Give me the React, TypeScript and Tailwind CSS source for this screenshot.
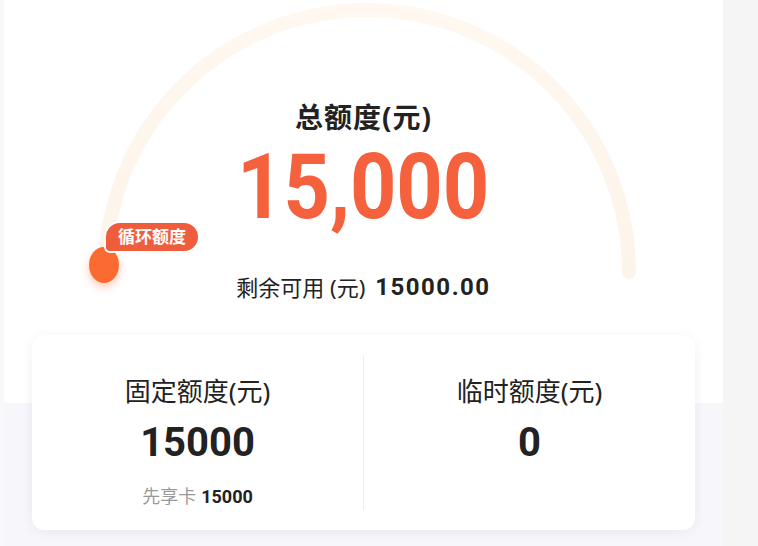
import React from "react";

const cjk = "font-['Noto_Sans','Noto_Sans_CJK_SC',sans-serif]";
const num = "font-['Roboto','Noto_Sans_CJK_SC',sans-serif]";

function Gauge() {
    return (
        <div className="relative h-[335px]">
            {/* 背景弧线 */}
            <svg className="absolute left-0 top-0" width="719" height="335" viewBox="0 0 719 335">
                <defs>
                    <linearGradient id="arcFade" x1="0" y1="0" x2="0" y2="1">
                        <stop offset="0" stopColor="#fef8f1" />
                        <stop offset="1" stopColor="#fdf4e9" />
                    </linearGradient>
                </defs>
                <path
                    d="M 101 272 A 262 262 0 0 1 625 272"
                    fill="none"
                    stroke="url(#arcFade)"
                    strokeWidth="14"
                    strokeLinecap="round"
                />
            </svg>

            <div className="relative flex flex-col items-center pt-[98px]">
                <div className={`${cjk} text-[28px] leading-[38px] font-bold tracking-[1px] text-[#222]`}>总额度(元)</div>
                <div className={`${num} mt-[7px] h-[90px] text-[90px] leading-[90px] font-bold text-[#f5603d] scale-x-90`}>
                    15,000
                </div>
                <div className="mt-[39px] flex items-center h-[30px] text-[#222]">
                    <span className={`${cjk} text-[22px]`}>剩余可用 (元)</span>
                    <span className={`${num} ml-[10px] text-[24px] font-bold tracking-[1.5px]`}>15000.00</span>
                </div>
            </div>

            {/* 进度点 + 气泡 */}
            <div className="absolute left-[85px] top-[247px] w-[30px] h-[36px] rounded-[50%] bg-[#fb6a30] shadow-[0_4px_10px_rgba(251,106,48,0.35)]" />
            <div className="absolute left-[100px] top-[221px] flex items-center h-[32px] px-[12px] rounded-[16px] rounded-bl-[6px] bg-[#ef5d3c] border-2 border-white">
                <span className={`${cjk} text-[17px] font-bold text-white`}>循环额度</span>
            </div>
        </div>
    );
}

export default function App() {
    return (
        <div className="flex w-[758px] h-[546px] bg-[#f5f5f5]">
            <div className="w-[723px] flex flex-col bg-white border-l-4 border-[#f8f8fa]">
                <Gauge />
                <div className="flex-1 px-[28px] pb-[16px] bg-[linear-gradient(to_bottom,#ffffff_68px,#f6f6fb_68px)]">
                    <div className="flex h-[195px] py-[20px] rounded-[12px] bg-white shadow-[0_2px_12px_rgba(20,20,60,0.06)]">
                        <div className="flex-1 flex flex-col items-center pt-[18px]">
                            <div className={`${cjk} text-[26px] leading-[36px] text-[#222]`}>固定额度(元)</div>
                            <div className={`${num} mt-[10px] text-[40px] leading-[48px] font-bold text-[#222]`}>15000</div>
                            <div className="mt-[16px] flex items-center h-[26px]">
                                <span className={`${cjk} text-[18px] text-[#999]`}>先享卡</span>
                                <span className={`${num} ml-[5px] text-[18px] font-bold text-[#222]`}>15000</span>
                            </div>
                        </div>
                        <div className="w-px bg-[#eeeeee]" />
                        <div className="flex-1 flex flex-col items-center pt-[18px]">
                            <div className={`${cjk} text-[26px] leading-[36px] text-[#222]`}>临时额度(元)</div>
                            <div className={`${num} mt-[10px] text-[40px] leading-[48px] font-bold text-[#222]`}>0</div>
                        </div>
                    </div>
                </div>
            </div>
        </div>
    );
}
